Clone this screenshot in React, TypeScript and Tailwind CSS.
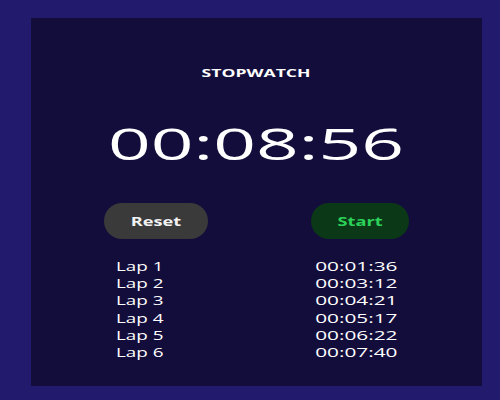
const laps = [
  { name: 'Lap 1', time: '00:01:36' },
  { name: 'Lap 2', time: '00:03:12' },
  { name: 'Lap 3', time: '00:04:21' },
  { name: 'Lap 4', time: '00:05:17' },
  { name: 'Lap 5', time: '00:06:22' },
  { name: 'Lap 6', time: '00:07:40' },
]

export default function App() {
  return (
    <div
      className="w-[500px] h-[400px] bg-[#221a6d] pt-[18px] pl-[31px]"
      style={{ fontFamily: '"Open Sans", "Liberation Sans", sans-serif' }}
    >
      <div className="w-[451px] h-[368px] bg-[#130d3b] flex flex-col items-center pt-[48px] text-white">
        <div className="text-[11px] leading-[14px] font-bold">
          <span className="inline-block scale-x-[1.6]">STOPWATCH</span>
        </div>

        <div className="mt-[39px] text-[43px] leading-[50px]">
          <span className="inline-block scale-x-[1.74]">00:08:56</span>
        </div>

        <div className="mt-[34px] w-[305px] flex justify-between">
          <button className="w-[104px] h-[36px] rounded-full bg-[#3a3a3a] text-[#f2f2f2] text-[13px] font-bold">
            <span className="inline-block scale-x-[1.4] translate-y-px">Reset</span>
          </button>
          <button className="w-[98px] h-[36px] rounded-full bg-[#0b3816] text-[#2bd159] text-[13px] font-bold">
            <span className="inline-block scale-x-[1.4] translate-y-px">Start</span>
          </button>
        </div>

        <div className="mt-[19px] w-[282px] flex flex-col text-[13px] leading-[17.2px]">
          {laps.map((lap) => (
            <div key={lap.name} className="flex justify-between">
              <span className="inline-block origin-left scale-x-[1.45]">{lap.name}</span>
              <span className="inline-block origin-right scale-x-[1.6]">{lap.time}</span>
            </div>
          ))}
        </div>
      </div>
    </div>
  )
}
